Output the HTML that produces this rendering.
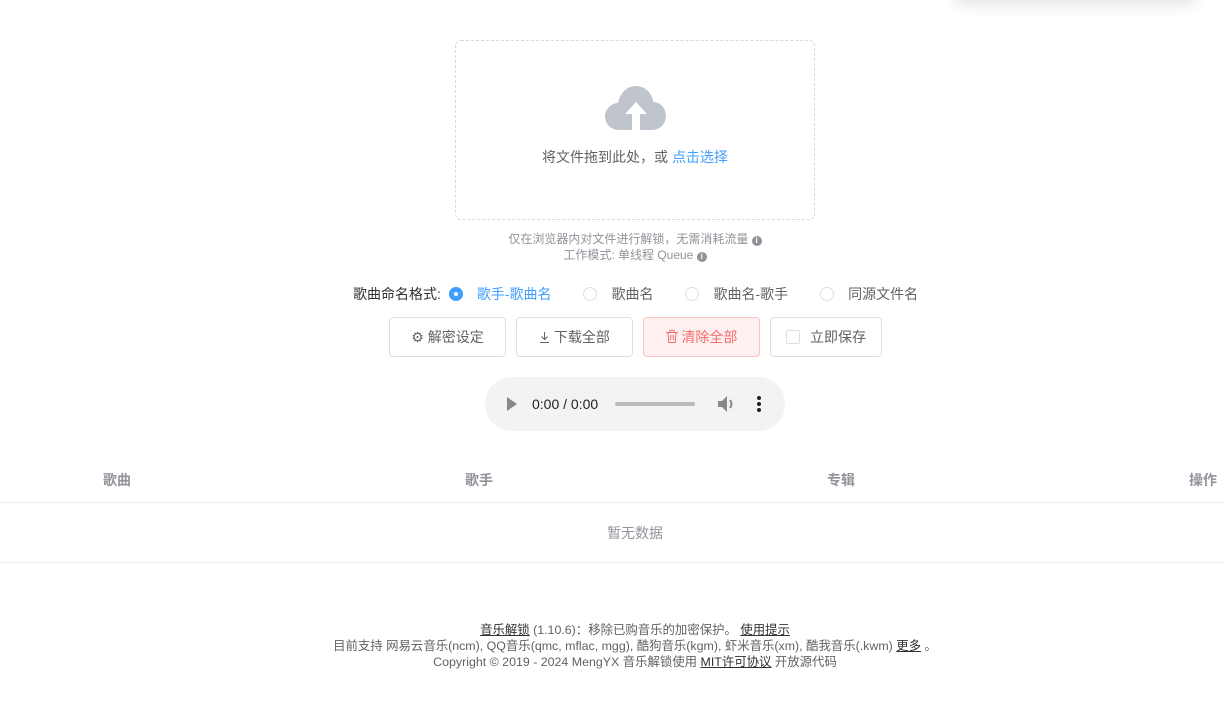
<!DOCTYPE html>
<html><head><meta charset="utf-8"><style>
*{box-sizing:border-box;margin:0;padding:0}
body{width:1224px;height:701px;background:#fff;font-family:"Liberation Sans","Noto Sans CJK SC",sans-serif;color:#606266;position:relative;overflow:hidden;font-size:14px}
.abs{position:absolute}
.shadow{left:955px;top:-30px;width:240px;height:30px;box-shadow:0 4px 16px rgba(0,0,0,.12);background:#fff;border-radius:6px}
.drop{left:455px;top:40px;width:360px;height:180px;border:1px dashed #d9d9d9;border-radius:6px}
.c{text-align:center;left:0;width:1270px}
.info{display:inline-block;width:10px;height:10px;border-radius:50%;background:#909399;color:#fff;font-size:8px;line-height:10px;text-align:center;font-weight:bold;vertical-align:0}
.radio{display:inline-block;width:14px;height:14px;border:1px solid #dcdfe6;border-radius:50%;vertical-align:-2px;margin-right:14px;position:relative}
.radio.on{border-color:#409eff;background:#409eff}
.radio.on:after{content:"";position:absolute;left:4px;top:4px;width:4px;height:4px;border-radius:50%;background:#fff}
.btn{top:317px;height:40px;border:1px solid #dcdfe6;border-radius:4px;font-size:14px;line-height:38px;text-align:center;color:#606266;background:#fff}
.th{top:470px;font-size:14px;font-weight:bold;color:#909399}
.line{left:0;width:1224px;height:1px;background:#ebeef5}
.ft{font-size:12.4px;color:#606266;line-height:16px}
.ft u{color:#303133}
</style></head><body>
<div class="abs shadow"></div>
<div class="abs drop">
<svg class="abs" style="left:149px;top:44px" width="62" height="46" viewBox="0 0 62 46"><path d="M14 45C6 45 0 39 0 31.5 0 24 6 18.5 13 18 15 8 22 1 31 1 40 1 47 8 48.5 17 56 17.5 61 23.5 61 31 61 38.5 55 45 47 45Z" fill="#c0c4cc"/><path d="M31 17L20 29H27V46H35V29H42Z" fill="#fff"/></svg>
<div class="abs" style="top:106px;width:358px;text-align:center;font-size:14px;color:#606266">将文件拖到此处，或 <span style="color:#409eff">点击选择</span></div>
</div>
<div class="abs c" style="top:231px;font-size:12px;color:#909399;line-height:16px">仅在浏览器内对文件进行解锁，无需消耗流量 <span class="info">i</span><br>工作模式: 单线程 Queue <span class="info">i</span></div>
<div class="abs" style="left:353px;top:284px;font-size:14px;color:#303133;white-space:nowrap">歌曲命名格式: <span class="radio on" style="margin-left:4px"></span><span style="color:#409eff;margin-right:32px">歌手-歌曲名</span><span class="radio"></span><span style="margin-right:32px;color:#606266">歌曲名</span><span class="radio"></span><span style="margin-right:32px;color:#606266">歌曲名-歌手</span><span class="radio"></span><span style="color:#606266">同源文件名</span></div>
<div class="abs btn" style="left:389px;width:117px"><span style="font-size:14px">⚙</span> 解密设定</div>
<div class="abs btn" style="left:516px;width:117px"><svg width="11" height="11" viewBox="0 0 11 11" style="vertical-align:-1px"><path d="M5.5 0V7M2.5 4.5L5.5 7.5 8.5 4.5M1 10.5H10" stroke="#606266" fill="none"/></svg> 下载全部</div>
<div class="abs btn" style="left:643px;width:117px;background:#fef0f0;border-color:#fbc4c4;color:#f56c6c"><svg width="12" height="13" viewBox="0 0 12 13" style="vertical-align:-1px"><path d="M0 2.5H12M4 2.5V.5H8V2.5M2 2.5L2.7 12.5H9.3L10 2.5M4.7 5V10M7.3 5V10" stroke="#f56c6c" fill="none"/></svg> 清除全部</div>
<div class="abs btn" style="left:770px;width:112px"><span style="display:inline-block;width:14px;height:14px;border:1px solid #dcdfe6;border-radius:2px;vertical-align:-2px;margin-right:10px"></span>立即保存</div>
<div class="abs" style="left:485px;top:377px;width:300px;height:54px;border-radius:27px;background:#f1f3f4">
<svg class="abs" style="left:22px;top:20px" width="10" height="14"><path d="M0 0L10 7 0 14Z" fill="#888"/></svg>
<div class="abs" style="left:47px;top:19px;font-size:14px;color:#1f1f1f">0:00 / 0:00</div>
<div class="abs" style="left:130px;top:25px;width:80px;height:4px;border-radius:2px;background:#bbb"></div>
<svg class="abs" style="left:233px;top:19px" width="18" height="16" viewBox="0 0 18 16"><path d="M0 5H4L9 0V16L4 11H0Z" fill="#888"/><path d="M12 4Q15 8 12 12" stroke="#888" stroke-width="2" fill="none"/></svg>
<div class="abs" style="left:272px;top:19px;width:4px;height:16px"><div style="width:4px;height:4px;border-radius:2px;background:#1f1f1f;margin-bottom:2px"></div><div style="width:4px;height:4px;border-radius:2px;background:#1f1f1f;margin-bottom:2px"></div><div style="width:4px;height:4px;border-radius:2px;background:#1f1f1f"></div></div>
</div>
<div class="abs th" style="left:103px">歌曲</div>
<div class="abs th" style="left:465px">歌手</div>
<div class="abs th" style="left:827px">专辑</div>
<div class="abs th" style="left:1189px">操作</div>
<div class="abs line" style="top:502px"></div>
<div class="abs c" style="top:523px;font-size:14px;color:#909399">暂无数据</div>
<div class="abs line" style="top:562px"></div>
<div class="abs c ft" style="top:622px"><u>音乐解锁</u> (1.10.6)：移除已购音乐的加密保护。 <u>使用提示</u><br>目前支持 网易云音乐(ncm), QQ音乐(qmc, mflac, mgg), 酷狗音乐(kgm), 虾米音乐(xm), 酷我音乐(.kwm) <u>更多</u> 。<br>Copyright © 2019 - 2024 MengYX 音乐解锁使用 <u>MIT许可协议</u> 开放源代码</div>
</body></html>
